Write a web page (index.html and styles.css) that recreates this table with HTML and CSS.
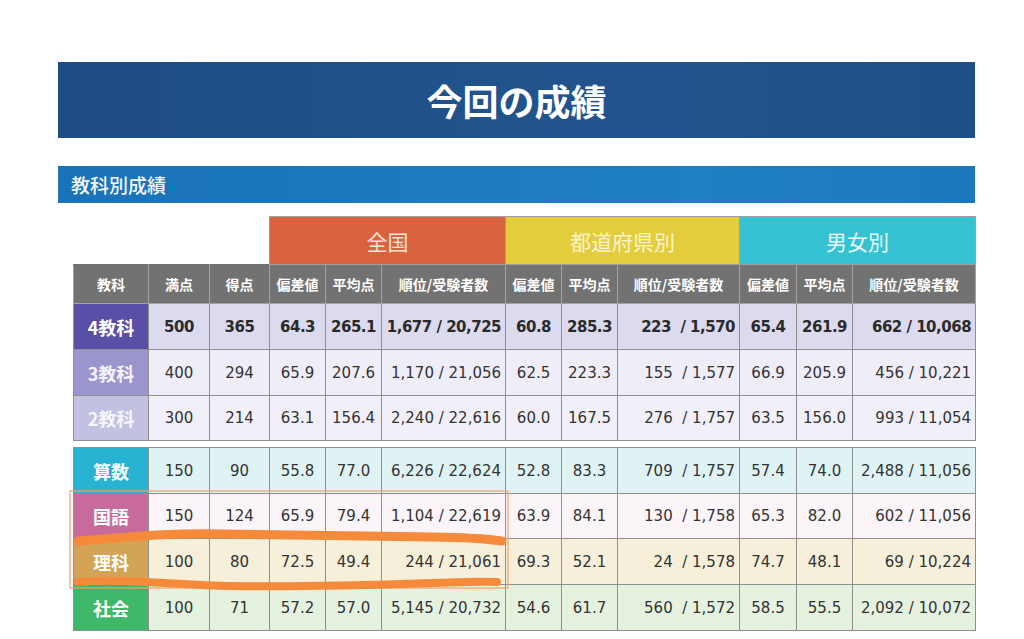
FILE: index.html
```html
<!DOCTYPE html>
<html lang="ja">
<head>
<meta charset="utf-8">
<title>今回の成績</title>
<link rel="stylesheet" href="styles.css">
</head>
<body>
<div class="page">
  <header class="title-bar"><h1>今回の成績</h1></header>
  <div class="sub-bar"><h2>教科別成績</h2></div>

  <table class="grid top">
    <colgroup>
      <col class="c-sub"><col class="c-max"><col class="c-pt">
      <col class="c-s"><col class="c-s"><col class="c-r1">
      <col class="c-s"><col class="c-s"><col class="c-r2">
      <col class="c-s2"><col class="c-s"><col class="c-r3">
    </colgroup>
    <tr class="groups">
      <td class="blank" colspan="3"></td>
      <th class="g-all" colspan="3">全国</th>
      <th class="g-pref" colspan="3">都道府県別</th>
      <th class="g-sex" colspan="3">男女別</th>
    </tr>
    <tr class="heads">
      <th>教科</th><th>満点</th><th>得点</th>
      <th>偏差値</th><th>平均点</th><th>順位/受験者数</th>
      <th>偏差値</th><th>平均点</th><th>順位/受験者数</th>
      <th>偏差値</th><th>平均点</th><th>順位/受験者数</th>
    </tr>
    <tr class="row r4 bold">
      <th class="lab">4教科</th><td>500</td><td>365</td>
      <td>64.3</td><td>265.1</td><td class="rk">1,677 / 20,725</td>
      <td>60.8</td><td>285.3</td><td class="rk">223  / 1,570</td>
      <td>65.4</td><td>261.9</td><td class="rk">662 / 10,068</td>
    </tr>
    <tr class="row r3">
      <th class="lab">3教科</th><td>400</td><td>294</td>
      <td>65.9</td><td>207.6</td><td class="rk">1,170 / 21,056</td>
      <td>62.5</td><td>223.3</td><td class="rk">155  / 1,577</td>
      <td>66.9</td><td>205.9</td><td class="rk">456 / 10,221</td>
    </tr>
    <tr class="row r2">
      <th class="lab">2教科</th><td>300</td><td>214</td>
      <td>63.1</td><td>156.4</td><td class="rk">2,240 / 22,616</td>
      <td>60.0</td><td>167.5</td><td class="rk">276  / 1,757</td>
      <td>63.5</td><td>156.0</td><td class="rk">993 / 11,054</td>
    </tr>
  </table>

  <div class="lower">
    <table class="grid">
      <colgroup>
        <col class="c-sub"><col class="c-max"><col class="c-pt">
        <col class="c-s"><col class="c-s"><col class="c-r1">
        <col class="c-s"><col class="c-s"><col class="c-r2">
        <col class="c-s2"><col class="c-s"><col class="c-r3">
      </colgroup>
      <tr class="row math">
        <th class="lab">算数</th><td>150</td><td>90</td>
        <td>55.8</td><td>77.0</td><td class="rk">6,226 / 22,624</td>
        <td>52.8</td><td>83.3</td><td class="rk">709  / 1,757</td>
        <td>57.4</td><td>74.0</td><td class="rk">2,488 / 11,056</td>
      </tr>
      <tr class="row jp">
        <th class="lab">国語</th><td>150</td><td>124</td>
        <td>65.9</td><td>79.4</td><td class="rk">1,104 / 22,619</td>
        <td>63.9</td><td>84.1</td><td class="rk">130  / 1,758</td>
        <td>65.3</td><td>82.0</td><td class="rk">602 / 11,056</td>
      </tr>
      <tr class="row sci">
        <th class="lab">理科</th><td>100</td><td>80</td>
        <td>72.5</td><td>49.4</td><td class="rk">244 / 21,061</td>
        <td>69.3</td><td>52.1</td><td class="rk">24  / 1,578</td>
        <td>74.7</td><td>48.1</td><td class="rk">69 / 10,224</td>
      </tr>
      <tr class="row soc">
        <th class="lab">社会</th><td>100</td><td>71</td>
        <td>57.2</td><td>57.0</td><td class="rk">5,145 / 20,732</td>
        <td>54.6</td><td>61.7</td><td class="rk">560  / 1,572</td>
        <td>58.5</td><td>55.5</td><td class="rk">2,092 / 10,072</td>
      </tr>
    </table>
    <svg class="marks" width="450" height="160" viewBox="0 0 450 160" aria-hidden="true">
      <rect x="-3" y="44" width="438" height="97" fill="none" stroke="#f3a06a" stroke-width="1.2"/>
      <path d="M5 94 C 60 90, 90 86, 150 87 S 300 89, 360 90 S 415 93, 429 94" fill="none" stroke="#f58a3b" stroke-width="9" stroke-linecap="round"/>
      <path d="M5 135 C 50 131, 100 138, 160 139 S 300 138, 360 136 S 410 135, 424 135" fill="none" stroke="#f58a3b" stroke-width="8" stroke-linecap="round"/>
    </svg>
  </div>
</div>
</body>
</html>
```

FILE: styles.css
```css
* { box-sizing: border-box; }

body {
  margin: 0;
  background: #ffffff;
  font-family: "DejaVu Sans", "Noto Sans CJK JP", sans-serif;
  color: #333333;
}

.page {
  width: 917px;
  margin: 62px 0 0 58px;
}

.title-bar {
  height: 76px;
  background: linear-gradient(90deg, #1e4c84 0%, #21548e 60%, #1f4f88 100%);
  display: flex;
  align-items: center;
  justify-content: center;
}

.title-bar h1 {
  margin: 0;
  font-family: "Noto Sans CJK JP", sans-serif;
  font-weight: 700;
  font-size: 36px;
  line-height: 1;
  color: #ffffff;
}

.sub-bar {
  margin-top: 28px;
  height: 37px;
  background: linear-gradient(90deg, #1a73b6 0%, #1f7fc2 70%, #1c78bb 100%);
  display: flex;
  align-items: center;
  padding-left: 13px;
}

.sub-bar h2 {
  margin: 0;
  font-family: "Noto Sans CJK JP", sans-serif;
  font-weight: 500;
  font-size: 19px;
  line-height: 1;
  color: #f4f8fc;
}

.grid {
  margin-left: 15px;
  width: 902px;
  table-layout: fixed;
  border-collapse: collapse;
}

.grid.top { margin-top: 13px; }

.c-sub { width: 75px; }
.c-max { width: 61px; }
.c-pt  { width: 60px; }
.c-s   { width: 56px; }
.c-s2  { width: 57px; }
.c-r1  { width: 124px; }
.c-r2  { width: 122px; }
.c-r3  { width: 123px; }

.grid th, .grid td {
  padding: 0;
  border: 1px solid #8f8f8f;
  text-align: center;
  white-space: pre;
  overflow: hidden;
}

.groups { height: 48px; }
.groups .blank { border: none; background: transparent; }
.groups th {
  font-family: "Noto Sans CJK JP", sans-serif;
  font-weight: 400;
  font-size: 21px;
  border-color: #a0a0a0;
  padding-top: 1px;
}
.g-all  { background: #d9633f; color: #f8e2d6; }
.g-pref { background: #e4cd3c; color: #faf3cc; }
.g-sex  { background: #35c3d4; color: #eafafc; }

.heads { height: 39px; }
.heads th {
  background: #727272;
  color: #ffffff;
  font-family: "Noto Sans CJK JP", sans-serif;
  font-weight: 700;
  font-size: 14px;
  border-color: #a2a2a2;
  border-top-color: #727272;
}

.row { height: 46px; }
.row td {
  font-size: 15px;
  color: #333333;
}
.row .rk {
  text-align: right;
  padding-right: 4px;
}

.lab {
  font-family: "Noto Sans CJK JP", sans-serif;
  font-weight: 700;
  font-size: 18px;
  color: #ffffff;
}

.bold td {
  font-weight: 700;
  font-size: 15px;
  letter-spacing: -0.5px;
  color: #2a2a2a;
}

.r4 td { background: #dcdaef; }
.r4 .lab { background: #5a4fa6; }
.r3 td { background: #efedf7; }
.r3 .lab { background: #9b95ce; color: #f4f3fb; }
.r2 { height: 45px; }
.r2 td { background: #f1f0f8; }
.r2 .lab { background: #c3c1e2; color: #f5f5fb; }

.lower {
  position: relative;
  margin-top: 6px;
}

.math td { background: #dff3f5; }
.math .lab { background: #29b3d3; }
.jp { height: 45px; }
.jp td { background: #fbf5f9; }
.jp .lab { background: #c76b9c; }
.sci td { background: #f6efd9; }
.sci .lab { background: #d4a456; }
.soc td { background: #e5f2df; }
.soc .lab { background: #3fb86a; }

.marks {
  position: absolute;
  left: 15px;
  top: 0;
  overflow: visible;
  pointer-events: none;
}
```
